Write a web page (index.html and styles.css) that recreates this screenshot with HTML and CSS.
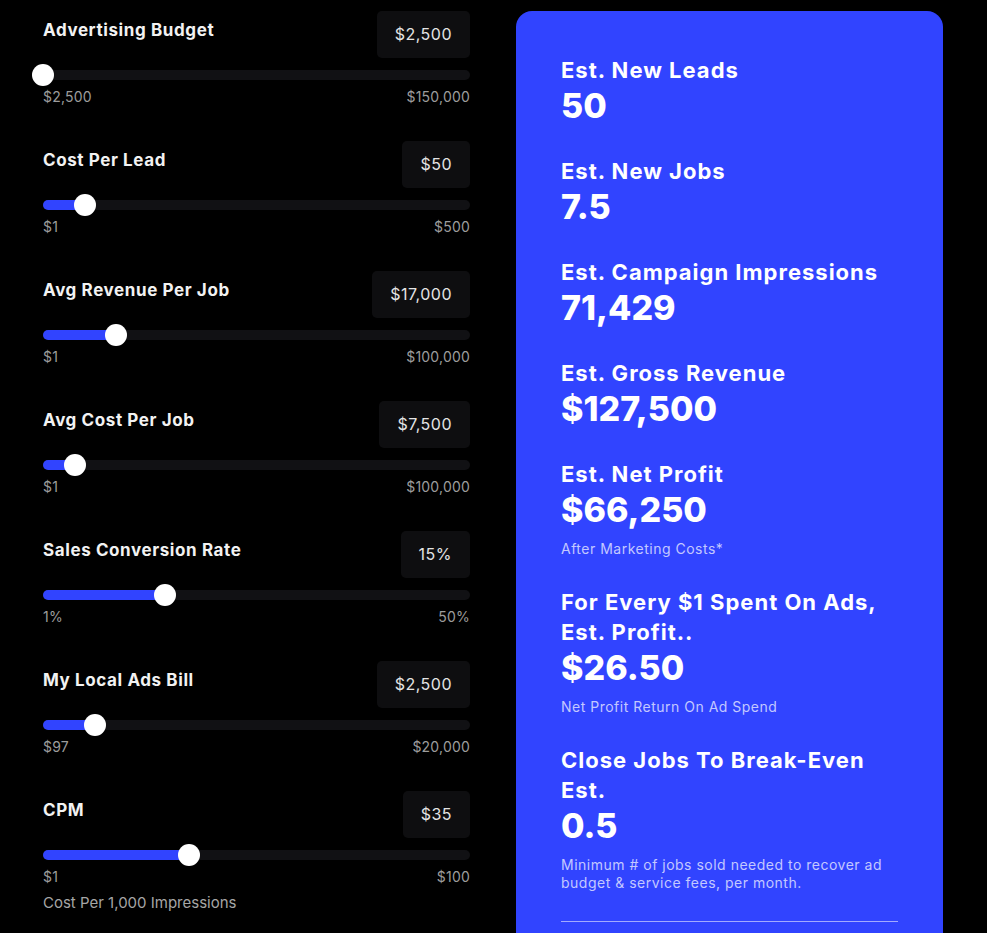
FILE: index.html
```html
<!DOCTYPE html>
<html lang="en">
	<head>
		<meta charset="UTF-8">
		<meta name="viewport" content="width=device-width, initial-scale=1.0">
		<title>Ad ROI Calculator</title>
		<link rel="stylesheet" href="styles.css">
	</head>
	<body>
		<main class="calc">
			<section class="inputs">
				<div class="field">
					<div class="field-head">
						<span class="field-label">Advertising Budget</span>
						<span class="value-box">$2,500</span>
					</div>
					<div class="slider">
						<div class="fill" style="width: 0%"></div>
						<div class="thumb" style="left: 0%"></div>
					</div>
					<div class="range-labels"><span>$2,500</span><span>$150,000</span></div>
				</div>

				<div class="field">
					<div class="field-head">
						<span class="field-label">Cost Per Lead</span>
						<span class="value-box">$50</span>
					</div>
					<div class="slider">
						<div class="fill" style="width: 9.8%"></div>
						<div class="thumb" style="left: 9.8%"></div>
					</div>
					<div class="range-labels"><span>$1</span><span>$500</span></div>
				</div>

				<div class="field">
					<div class="field-head">
						<span class="field-label">Avg Revenue Per Job</span>
						<span class="value-box">$17,000</span>
					</div>
					<div class="slider">
						<div class="fill" style="width: 17%"></div>
						<div class="thumb" style="left: 17%"></div>
					</div>
					<div class="range-labels"><span>$1</span><span>$100,000</span></div>
				</div>

				<div class="field">
					<div class="field-head">
						<span class="field-label">Avg Cost Per Job</span>
						<span class="value-box">$7,500</span>
					</div>
					<div class="slider">
						<div class="fill" style="width: 7.5%"></div>
						<div class="thumb" style="left: 7.5%"></div>
					</div>
					<div class="range-labels"><span>$1</span><span>$100,000</span></div>
				</div>

				<div class="field">
					<div class="field-head">
						<span class="field-label">Sales Conversion Rate</span>
						<span class="value-box">15%</span>
					</div>
					<div class="slider">
						<div class="fill" style="width: 28.6%"></div>
						<div class="thumb" style="left: 28.6%"></div>
					</div>
					<div class="range-labels"><span>1%</span><span>50%</span></div>
				</div>

				<div class="field">
					<div class="field-head">
						<span class="field-label">My Local Ads Bill</span>
						<span class="value-box">$2,500</span>
					</div>
					<div class="slider">
						<div class="fill" style="width: 12.1%"></div>
						<div class="thumb" style="left: 12.1%"></div>
					</div>
					<div class="range-labels"><span>$97</span><span>$20,000</span></div>
				</div>

				<div class="field">
					<div class="field-head">
						<span class="field-label">CPM</span>
						<span class="value-box">$35</span>
					</div>
					<div class="slider">
						<div class="fill" style="width: 34.3%"></div>
						<div class="thumb" style="left: 34.3%"></div>
					</div>
					<div class="range-labels"><span>$1</span><span>$100</span></div>
					<p class="field-note">Cost Per 1,000 Impressions</p>
				</div>
			</section>

			<section class="results">
				<div class="stat">
					<h2>Est. New Leads</h2>
					<div class="stat-value">50</div>
				</div>
				<div class="stat">
					<h2>Est. New Jobs</h2>
					<div class="stat-value">7.5</div>
				</div>
				<div class="stat">
					<h2>Est. Campaign Impressions</h2>
					<div class="stat-value">71,429</div>
				</div>
				<div class="stat">
					<h2>Est. Gross Revenue</h2>
					<div class="stat-value">$127,500</div>
				</div>
				<div class="stat">
					<h2>Est. Net Profit</h2>
					<div class="stat-value">$66,250</div>
					<p class="stat-note">After Marketing Costs*</p>
				</div>
				<div class="stat">
					<h2>For Every $1 Spent On Ads, Est. Profit..</h2>
					<div class="stat-value">$26.50</div>
					<p class="stat-note">Net Profit Return On Ad Spend</p>
				</div>
				<div class="stat">
					<h2>Close Jobs To Break-Even Est.</h2>
					<div class="stat-value">0.5</div>
					<p class="stat-note">Minimum # of jobs sold needed to recover ad budget &amp; service fees, per month.</p>
				</div>
				<hr class="divider">
			</section>
		</main>
	</body>
</html>
```

FILE: styles.css
```css
body{
	margin: 0;
	background-color: #000;
	color: #fff;
	font-family: Inter, "Noto Sans", sans-serif;
}
.calc{
	display: grid;
	grid-template-columns: 427px 427px;
	gap: 46px;
	padding: 11px 44px 0 43px;
	align-items: start;
}
.field{
	margin-bottom: 36px;
}
.field-head{
	display: flex;
	justify-content: space-between;
	align-items: flex-start;
	height: 47px;
}
.field-label{
	padding-top: 9px;
	font-size: 17px;
	line-height: 20px;
	font-weight: 700;
	letter-spacing: 0.6px;
	color: #f2f2f2;
}
.value-box{
	height: 47px;
	line-height: 47px;
	padding: 0 18px;
	background-color: #0e0e10;
	border-radius: 5px;
	font-size: 16px;
	letter-spacing: 0.5px;
	color: #e4e4e4;
}
.slider{
	position: relative;
	margin-top: 12px;
	height: 10px;
	background-color: #111114;
	border-radius: 5px;
}
.fill{
	height: 100%;
	background-color: #3144ff;
	border-radius: 5px;
}
.thumb{
	position: absolute;
	top: 50%;
	width: 22px;
	height: 22px;
	background-color: #fff;
	border-radius: 50%;
	transform: translate(-50%, -50%);
}
.range-labels{
	display: flex;
	justify-content: space-between;
	margin-top: 8px;
	font-size: 14px;
	line-height: 17px;
	letter-spacing: 0.2px;
	color: #9c9c9c;
}
.field-note{
	margin: 9px 0 0;
	font-size: 15px;
	line-height: 17px;
	color: #a6a6a6;
}
.results{
	background-color: #3144ff;
	border-radius: 16px;
	padding: 44px 45px 60px;
	min-height: 960px;
	box-sizing: border-box;
}
.stat{
	margin-bottom: 29px;
}
.stat h2{
	margin: 0;
	font-size: 22px;
	line-height: 30px;
	font-weight: 700;
	letter-spacing: 1px;
}
.stat-value{
	font-size: 34px;
	line-height: 42px;
	font-weight: 800;
}
.stat-note{
	margin: 9px 0 0;
	font-size: 14px;
	line-height: 18px;
	letter-spacing: 0.5px;
	color: #c3c8ff;
}
.divider{
	margin: 28px 0 0;
	border: 0;
	border-top: 1px solid rgba(255, 255, 255, 0.55);
}
```
